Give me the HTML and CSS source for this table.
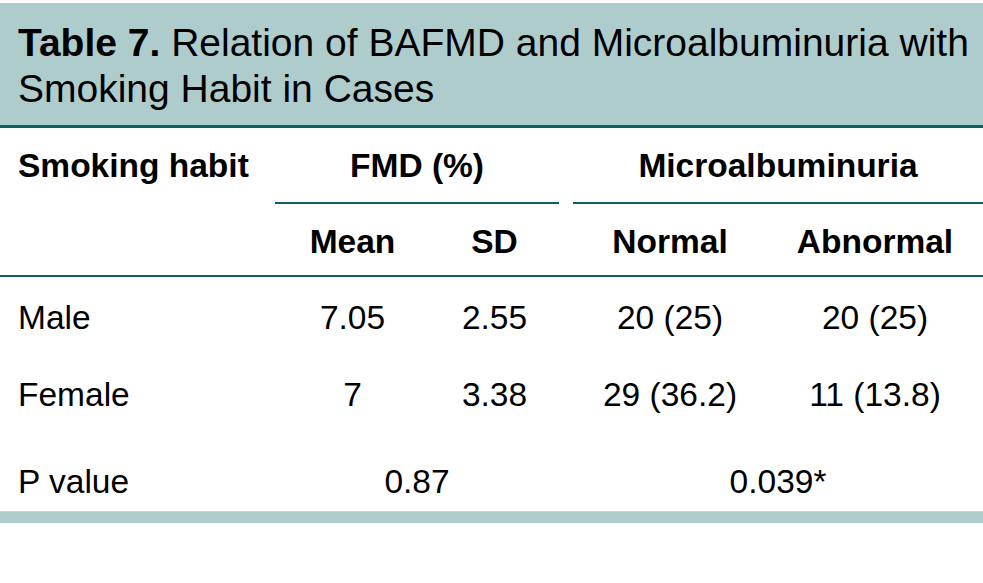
FILE: index.html
```html
<!DOCTYPE html>
<html lang="en">
<head>
<meta charset="utf-8">
<title>Table 7</title>
<link rel="stylesheet" href="styles.css">
</head>
<body>
<div class="wrap">
  <div class="caption"><b>Table 7.</b> Relation of BAFMD and Microalbuminuria with Smoking Habit in Cases</div>
  <table class="data">
    <colgroup>
      <col class="c-label">
      <col class="c-mean">
      <col class="c-sd">
      <col class="c-gap">
      <col class="c-normal">
      <col class="c-abn">
    </colgroup>
    <thead>
      <tr class="h1">
        <th class="first" rowspan="2">Smoking habit</th>
        <th class="group" colspan="2">FMD (%)</th>
        <th class="gap"></th>
        <th class="group" colspan="2">Microalbuminuria</th>
      </tr>
      <tr class="h2">
        <th>Mean</th>
        <th>SD</th>
        <th class="gap"></th>
        <th>Normal</th>
        <th>Abnormal</th>
      </tr>
    </thead>
    <tbody>
      <tr class="r1">
        <td class="first">Male</td>
        <td>7.05</td>
        <td>2.55</td>
        <td class="gap"></td>
        <td>20 (25)</td>
        <td>20 (25)</td>
      </tr>
      <tr class="r2">
        <td class="first">Female</td>
        <td>7</td>
        <td>3.38</td>
        <td class="gap"></td>
        <td>29 (36.2)</td>
        <td>11 (13.8)</td>
      </tr>
      <tr class="r3">
        <td class="first">P value</td>
        <td colspan="2">0.87</td>
        <td class="gap"></td>
        <td colspan="2">0.039*</td>
      </tr>
    </tbody>
  </table>
  <div class="endbar"></div>
</div>
</body>
</html>
```

FILE: styles.css
```css
html, body {
  margin: 0;
  padding: 0;
  background: #ffffff;
}

body {
  padding-top: 3px;
  font-family: "Liberation Sans", Arial, Helvetica, sans-serif;
  color: #000000;
}

.wrap {
  width: 983px;
}

.caption {
  background: #afcccd;
  padding: 17px 0 13px 18px;
  font-size: 39px;
  line-height: 46px;
  border-bottom: 3px solid #0e6061;
}

.caption b {
  font-weight: 700;
}

.data {
  width: 983px;
  table-layout: fixed;
  border-collapse: separate;
  border-spacing: 0;
  font-size: 33.5px;
  line-height: 40px;
}

.c-label { width: 275px; }
.c-mean { width: 155px; }
.c-sd { width: 129px; }
.c-gap { width: 14px; }
.c-normal { width: 194px; }
.c-abn { width: 216px; }

.data th,
.data td {
  padding: 0;
  text-align: center;
  vertical-align: top;
  white-space: nowrap;
}

.data th {
  font-weight: 700;
}

.data .first {
  text-align: left;
  padding-left: 18px;
}

.h1 th {
  padding-top: 18px;
  padding-bottom: 16px;
}

.h1 th.group {
  border-bottom: 2px solid #0e6061;
}

.h1 th.first {
  border-bottom: 2px solid #0e6061;
}

.h2 th {
  padding-top: 18px;
  padding-bottom: 13px;
  border-bottom: 2px solid #0e6061;
}

.r1 td {
  padding-top: 21px;
  padding-bottom: 16px;
}

.r2 td {
  padding-top: 21px;
  padding-bottom: 26px;
}

.r3 td {
  padding-top: 21px;
  padding-bottom: 9px;
}

.endbar {
  height: 12px;
  background: #afcccd;
  border-top: 1px solid #c3d8d8;
  box-sizing: border-box;
}
```
